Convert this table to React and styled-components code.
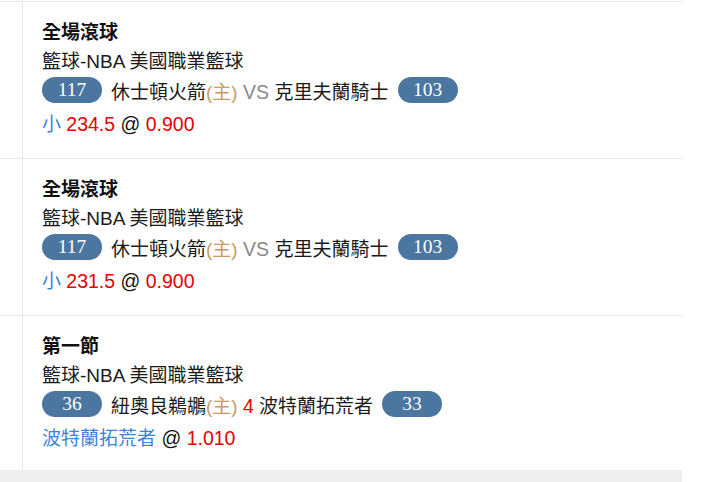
import React from "react";
import styled, { createGlobalStyle } from "styled-components";

const Global = createGlobalStyle`
  html, body { margin: 0; padding: 0; background: #fff; }
  body { font-family: "Liberation Sans", "Noto Sans CJK TC", sans-serif; }
`;

const Page = styled.div`
  width: 682px;
  min-height: 482px;
  background: #efefef;
`;

const List = styled.div`
  background: #fff;
  margin-top: 1px;
  border-top: 1px solid #e8e8e8;
`;

const Row = styled.div`
  display: grid;
  grid-template-columns: 23px 1fr;
  height: 156px;
  border-bottom: 1px solid #e8e8e8;

  &:last-child {
    height: 154px;
    border-bottom: none;
  }
`;

const Gutter = styled.div`
  border-right: 1px solid #e8e8e8;
`;

const Body = styled.div`
  padding: 16px 0 0 19px;
  font-size: 19px;
  color: #1a1a1a;
`;

const Title = styled.div`
  font-weight: bold;
  line-height: 30px;
  color: #111;
`;

const League = styled.div`
  line-height: 28px;
`;

const Match = styled.div`
  display: flex;
  align-items: center;
  gap: 9px;
  height: 28px;
  white-space: pre;
`;

const Score = styled.span`
  display: inline-flex;
  align-items: center;
  justify-content: center;
  width: 60px;
  height: 26px;
  border-radius: 13px;
  background: #4a76a0;
  color: #fff;
  font-family: "Liberation Serif", "DejaVu Serif", serif;
  font-size: 19.5px;
`;

const Bet = styled.div`
  margin-top: 5px;
  line-height: 30px;
  white-space: pre;
`;

const Tone = styled.span`
  font-size: ${(p) => (p.$latin ? "19.5px" : "inherit")};
  color: ${(p) =>
    p.$tone === "red"
      ? "#e60000"
      : p.$tone === "blue"
      ? "#3d84d6"
      : p.$tone === "tan"
      ? "#c99a62"
      : p.$tone === "gray"
      ? "#8a8a8a"
      : "#111"};
`;

const items = [
  {
    title: "全場滾球",
    home: "117",
    away: "103",
    mid: [["休士頓火箭", null], ["(主)", "tan"], [" VS ", "gray", true], ["克里夫蘭騎士", null]],
    bet: [["小", "blue"], [" "], ["234.5", "red", true], [" @ ", "dark", true], ["0.900", "red", true]],
  },
  {
    title: "全場滾球",
    home: "117",
    away: "103",
    mid: [["休士頓火箭", null], ["(主)", "tan"], [" VS ", "gray", true], ["克里夫蘭騎士", null]],
    bet: [["小", "blue"], [" "], ["231.5", "red", true], [" @ ", "dark", true], ["0.900", "red", true]],
  },
  {
    title: "第一節",
    home: "36",
    away: "33",
    mid: [["紐奧良鵜鶘", null], ["(主)", "tan"], [" "], ["4", "red", true], [" 波特蘭拓荒者", null]],
    bet: [["波特蘭拓荒者", "blue"], [" @ ", "dark", true], ["1.010", "red", true]],
  },
];

const renderParts = (parts) =>
  parts.map(([t, tone, latin], i) =>
    tone ? (
      <Tone key={i} $tone={tone} $latin={latin}>
        {t}
      </Tone>
    ) : (
      <React.Fragment key={i}>{t}</React.Fragment>
    )
  );

export default function App() {
  return (
    <>
      <Global />
      <Page>
        <List>
          {items.map((it, idx) => (
            <Row key={idx}>
              <Gutter />
              <Body>
                <Title>{it.title}</Title>
                <League>籃球-NBA 美國職業籃球</League>
                <Match>
                  <Score>{it.home}</Score>
                  <span>{renderParts(it.mid)}</span>
                  <Score>{it.away}</Score>
                </Match>
                <Bet>{renderParts(it.bet)}</Bet>
              </Body>
            </Row>
          ))}
        </List>
      </Page>
    </>
  );
}
